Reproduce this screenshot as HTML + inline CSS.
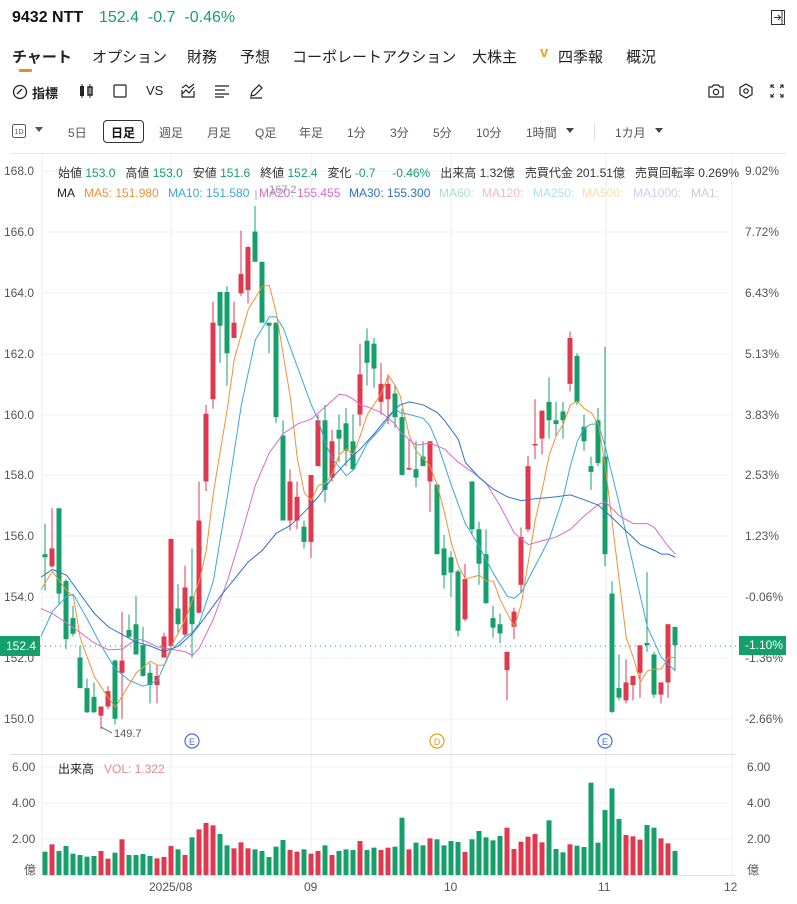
<!DOCTYPE html>
<html><head><meta charset="utf-8">
<style>
*{margin:0;padding:0;box-sizing:border-box}
body{width:797px;height:904px;background:#fff;font-family:"Liberation Sans","Noto Sans CJK JP",sans-serif;color:#222;position:relative;overflow:hidden}
.a{position:absolute;white-space:nowrap}
.g{color:#15a06b}
.tf{font-size:12px;color:#555;top:124px}
.info{font-size:12px;top:164px}
.ma{font-size:12px;top:186px}
.ax{font-size:12px;color:#555}
</style></head><body>
<div class="a" style="left:12px;top:9px;font-size:16px;font-weight:bold;color:#111">9432 NTT</div>
<div class="a g" style="left:99px;top:9px;font-size:16px">152.4&nbsp;&nbsp;-0.7&nbsp;&nbsp;-0.46%</div>
<svg class="a" style="left:771px;top:10px" width="14" height="15"><rect x="0.5" y="0.5" width="13" height="14" fill="none" stroke="#333"/><path d="M3 7.5H9M7 5L9.5 7.5L7 10" stroke="#333" fill="none"/><line x1="11" y1="1" x2="11" y2="14" stroke="#333"/></svg>

<div class="a" style="left:12px;top:46px;font-size:15px;font-weight:bold">チャート</div>
<div class="a" style="left:19px;top:69px;width:13px;height:3px;background:#e88a2a;border-radius:1px"></div>
<div class="a" style="left:92px;top:46px;font-size:15px">オプション</div>
<div class="a" style="left:187px;top:46px;font-size:15px">財務</div>
<div class="a" style="left:240px;top:46px;font-size:15px">予想</div>
<div class="a" style="left:292px;top:46px;font-size:15px">コーポレートアクション</div>
<div class="a" style="left:472px;top:46px;font-size:15px">大株主</div>
<div class="a" style="left:540px;top:44px;font-size:15px;color:#f0a020;font-weight:bold">v</div>
<div class="a" style="left:558px;top:46px;font-size:15px">四季報</div>
<div class="a" style="left:626px;top:46px;font-size:15px">概況</div>

<svg class="a" style="left:12px;top:84px" width="16" height="16"><circle cx="8" cy="8" r="6.5" fill="none" stroke="#222" stroke-width="1.3"/><path d="M5 10L10 5" stroke="#222" stroke-width="1.3"/></svg>
<div class="a" style="left:32px;top:83px;font-size:13px;font-weight:bold">指標</div>
<svg class="a" style="left:78px;top:83px" width="16" height="16"><rect x="2" y="3" width="4" height="10" fill="#222"/><line x1="4" y1="1" x2="4" y2="15" stroke="#222"/><rect x="10" y="4" width="4" height="8" fill="none" stroke="#222" stroke-width="1.5"/><line x1="12" y1="1" x2="12" y2="15" stroke="#222"/></svg>
<svg class="a" style="left:113px;top:84px" width="14" height="14"><rect x="1" y="1" width="12" height="12" rx="1" fill="none" stroke="#222" stroke-width="1.2"/></svg>
<div class="a" style="left:146px;top:83px;font-size:13px">VS</div>
<svg class="a" style="left:180px;top:83px" width="16" height="16"><path d="M2 7V14H14V8M2 11L6 7L9 10L14 4M2 5L6 2L9 5L14 1" fill="none" stroke="#222" stroke-width="1.2"/></svg>
<svg class="a" style="left:214px;top:84px" width="16" height="14"><path d="M1 2H15M1 6H11M1 10H15M1 13H10" stroke="#222" stroke-width="1.2"/></svg>
<svg class="a" style="left:248px;top:83px" width="16" height="16"><path d="M3 13L4 9L11 2L14 5L7 12Z M2 15H14" fill="none" stroke="#222" stroke-width="1.2"/></svg>
<svg class="a" style="left:708px;top:83px" width="16" height="16"><path d="M1 4H4L5.5 2H10.5L12 4H15V14H1Z" fill="none" stroke="#222" stroke-width="1.2"/><circle cx="8" cy="9" r="2.6" fill="none" stroke="#222" stroke-width="1.2"/></svg>
<svg class="a" style="left:738px;top:83px" width="16" height="16"><path d="M8 1L14 4.5V11.5L8 15L2 11.5V4.5Z" fill="none" stroke="#222" stroke-width="1.2"/><circle cx="8" cy="8" r="2.2" fill="none" stroke="#222" stroke-width="1.2"/></svg>
<svg class="a" style="left:770px;top:84px" width="14" height="14"><path d="M1 4V1H4M10 1H13V4M13 10V13H10M4 13H1V10M1 1L4 4M13 1L10 4M13 13L10 10M1 13L4 10" fill="none" stroke="#222" stroke-width="1.1"/></svg>

<svg class="a" style="left:12px;top:124px" width="14" height="14"><rect x="0.5" y="0.5" width="13" height="13" rx="2" fill="none" stroke="#555"/><text x="7" y="10" font-size="7" text-anchor="middle" fill="#555" font-family="Liberation Sans">1D</text></svg>
<div class="a" style="left:35px;top:127px;width:0;height:0;border-left:4px solid transparent;border-right:4px solid transparent;border-top:5px solid #555"></div>
<div class="a tf" style="left:68px">5日</div>
<div class="a" style="left:103px;top:120px;width:41px;height:23px;border:1px solid #333;border-radius:4px"></div>
<div class="a tf" style="left:111px;color:#111;font-weight:bold">日足</div>
<div class="a tf" style="left:159px">週足</div>
<div class="a tf" style="left:207px">月足</div>
<div class="a tf" style="left:255px">Q足</div>
<div class="a tf" style="left:299px">年足</div>
<div class="a tf" style="left:347px">1分</div>
<div class="a tf" style="left:390px">3分</div>
<div class="a tf" style="left:433px">5分</div>
<div class="a tf" style="left:476px">10分</div>
<div class="a tf" style="left:526px">1時間</div>
<div class="a" style="left:566px;top:128px;width:0;height:0;border-left:4px solid transparent;border-right:4px solid transparent;border-top:5px solid #444"></div>
<div class="a" style="left:594px;top:123px;width:1px;height:16px;background:#ddd"></div>
<div class="a tf" style="left:615px">1カ月</div>
<div class="a" style="left:655px;top:128px;width:0;height:0;border-left:4px solid transparent;border-right:4px solid transparent;border-top:5px solid #444"></div>

<svg id="ch" class="a" style="left:0;top:0" width="797" height="904"></svg>

<div class="a info" style="left:58px;color:#333">始値 <span class="g">153.0</span>&nbsp;&nbsp; 高値 <span class="g">153.0</span>&nbsp;&nbsp; 安値 <span class="g">151.6</span>&nbsp;&nbsp; 終値 <span class="g">152.4</span>&nbsp;&nbsp; 変化 <span class="g">-0.7</span>&nbsp;&nbsp;&nbsp;&nbsp; <span class="g">-0.46%</span>&nbsp;&nbsp; 出来高 1.32億&nbsp;&nbsp; 売買代金 201.51億&nbsp;&nbsp; 売買回転率 0.269%</div>
<div class="a ma" style="left:57px;color:#222">MA</div>
<div class="a ma" style="left:84px;color:#f0913a">MA5: 151.980</div>
<div class="a ma" style="left:168px;color:#3aa8d8">MA10: 151.580</div>
<div class="a ma" style="left:259px;color:#d86ad0">MA20: 155.455</div>
<div class="a ma" style="left:349px;color:#2c72c8">MA30: 155.300</div>
<div class="a ma" style="left:439px;color:#a8e0cc">MA60:</div>
<div class="a ma" style="left:482px;color:#f4b8c0">MA120:</div>
<div class="a ma" style="left:533px;color:#a8e4f0">MA250:</div>
<div class="a ma" style="left:582px;color:#f8e0a8">MA500:</div>
<div class="a ma" style="left:633px;color:#d8c8f0">MA1000:</div>
<div class="a ma" style="left:691px;color:#ccc">MA1:</div>
<div class="a" style="left:269px;top:184px;font-size:11px;color:#999">167.2</div>

<div class="a ax" style="left:4px;top:164px">168.0</div>
<div class="a ax" style="left:4px;top:225px">166.0</div>
<div class="a ax" style="left:4px;top:286px">164.0</div>
<div class="a ax" style="left:4px;top:347px">162.0</div>
<div class="a ax" style="left:4px;top:408px">160.0</div>
<div class="a ax" style="left:4px;top:468px">158.0</div>
<div class="a ax" style="left:4px;top:529px">156.0</div>
<div class="a ax" style="left:4px;top:590px">154.0</div>
<div class="a ax" style="left:4px;top:651px">152.0</div>
<div class="a ax" style="left:4px;top:712px">150.0</div>
<div class="a ax" style="left:745px;top:164px">9.02%</div>
<div class="a ax" style="left:745px;top:225px">7.72%</div>
<div class="a ax" style="left:745px;top:286px">6.43%</div>
<div class="a ax" style="left:745px;top:347px">5.13%</div>
<div class="a ax" style="left:745px;top:408px">3.83%</div>
<div class="a ax" style="left:745px;top:468px">2.53%</div>
<div class="a ax" style="left:745px;top:529px">1.23%</div>
<div class="a ax" style="left:745px;top:590px">-0.06%</div>
<div class="a ax" style="left:745px;top:651px">-1.36%</div>
<div class="a ax" style="left:745px;top:712px">-2.66%</div>
<div class="a" style="left:0;top:636px;width:40px;height:20px;background:#15a06b;color:#fff;font-size:12px;padding:3px 0 0 6px">152.4</div>
<div class="a" style="left:739px;top:636px;width:47px;height:19px;background:#15a06b;color:#fff;font-size:12px;padding:2px 0 0 6px">-1.10%</div>
<div class="a" style="left:114px;top:728px;font-size:11px;color:#555">149.7</div>

<div class="a ax" style="left:12px;top:760px">6.00</div>
<div class="a ax" style="left:12px;top:796px">4.00</div>
<div class="a ax" style="left:12px;top:832px">2.00</div>
<div class="a ax" style="left:24px;top:861px">億</div>
<div class="a ax" style="left:747px;top:760px">6.00</div>
<div class="a ax" style="left:747px;top:796px">4.00</div>
<div class="a ax" style="left:747px;top:832px">2.00</div>
<div class="a ax" style="left:747px;top:861px">億</div>
<div class="a" style="left:58px;top:760px;font-size:12px;color:#222">出来高&nbsp;&nbsp; <span style="color:#e88a90">VOL: 1.322</span></div>
<div class="a ax" style="left:149px;top:880px">2025/08</div>
<div class="a ax" style="left:304px;top:880px">09</div>
<div class="a ax" style="left:444px;top:880px">10</div>
<div class="a ax" style="left:598px;top:880px">11</div>
<div class="a ax" style="left:724px;top:880px">12</div>

<script>
var G="#15a06b",R="#e0394f";
var s='';
[171,232,293,354,415,475,536,597,658,719].forEach(function(y){s+='<line x1="42" x2="732" y1="'+y+'" y2="'+y+'" stroke="#f0f0f0"/>';});
[767,803,839].forEach(function(y){s+='<line x1="42" x2="732" y1="'+y+'" y2="'+y+'" stroke="#f0f0f0"/>';});
[42,171,311,451,606,732].forEach(function(x){s+='<line x1="'+x+'" x2="'+x+'" y1="153" y2="875" stroke="#eeeeee"/>';});
s+='<line x1="10" x2="786" y1="153.5" y2="153.5" stroke="#e6e6e6"/>';
s+='<line x1="10" x2="735" y1="754.5" y2="754.5" stroke="#e0e0e0"/>';
s+='<line x1="42" x2="735" y1="875.5" y2="875.5" stroke="#e0e0e0"/>';
s+='<line x1="40" x2="739" y1="646" y2="646" stroke="#15a06b" stroke-dasharray="1,4"/>';
var c=[
[G,1030,1038,950,1125],[R,1015,1062,910,1065],[G,910,1133,910,1160],[G,1100,1252,1095,1278],[G,1197,1238,1165,1245],
[G,1300,1380,1270,1380],[G,1380,1443,1355,1445],[G,1403,1443,1365,1445],[R,1428,1452,1428,1487],[R,1388,1428,1375,1435],
[G,1308,1460,1305,1475],[R,1308,1340,1180,1460],[G,1228,1246,1188,1250],[G,1213,1292,1140,1292],[G,1268,1348,1220,1350],
[G,1340,1372,1315,1420],[R,1348,1372,1320,1420],[R,1245,1300,1235,1300],[R,990,1270,990,1275],[G,1172,1213,1108,1240],
[R,1117,1240,1060,1245],[G,1140,1213,1015,1300],[R,942,1183,840,1185],[R,663,840,640,865],[R,425,625,370,650],
[G,345,433,345,530],[G,345,505,330,590],[R,425,465,370,465],[R,298,348,185,355],[R,227,340,227,375],
[G,187,266,120,266],[G,266,425,266,425],[G,425,433,425,505],[G,425,672,425,688],[G,720,942,680,942],
[R,840,942,808,968],[R,880,942,840,965],[G,958,998,942,1015],[R,823,998,823,1040],[R,680,800,665,800],
[G,680,862,640,895],[R,735,830,705,840],[G,705,728,665,790],[G,688,760,648,800],[G,735,808,665,810],
[R,560,665,480,695],[G,472,530,440,590],[G,480,545,465,595],[R,585,632,530,665],[R,585,625,560,690],
[G,610,672,590,700],[G,672,823,650,823],[R,805,808,730,810],[G,808,830,735,855],[G,775,800,735,800],
[R,735,840,735,920],[G,848,1030,848,1030],[G,1015,1085,980,1120],[G,1038,1078,1022,1142],[G,1075,1230,1070,1245],
[R,1095,1200,1055,1205],[G,840,965,840,980],[G,965,1055,945,1110],[G,1030,1158,965,1160],[G,1197,1222,1165,1248],
[G,1213,1237,1185,1262],[R,1285,1333,1285,1412],[R,1180,1220,1170,1252],[R,985,1110,960,1130],[R,800,965,773,972],
[R,742,746,625,782],[R,655,728,655,770],[G,632,680,568,728],[G,680,690,632,720],[G,657,680,632,728],
[R,465,585,448,605],[G,512,632,505,640],[G,697,735,665,760],[G,800,815,775,862],[G,680,792,648,800],
[G,775,1030,488,1062],[G,1133,1442,1100,1445],[G,1380,1405,1292,1412],[R,1365,1412,1305,1420],[R,1348,1372,1348,1412],
[R,1268,1340,1268,1405],[G,1262,1268,1077,1285],[G,1292,1397,1285,1405],[R,1365,1397,1365,1420],[R,1213,1365,1213,1405],
[G,1220,1268,1220,1333]];
function Y(z){return 160+z/2.613;}
c.forEach(function(d,i){var x=45+7*i;var t=Y(d[1]),b=Y(d[2]);if(b-t<1.5)b=t+1.5;
s+='<line x1="'+x+'" x2="'+x+'" y1="'+Y(d[3])+'" y2="'+Y(d[4])+'" stroke="'+d[0]+'" stroke-width="1"/>';
s+='<rect x="'+(x-2.5)+'" y="'+t+'" width="5" height="'+(b-t)+'" fill="'+d[0]+'"/>';});
var v=[305,283,303,288,311,315,320,318,303,326,308,268,315,315,312,318,325,321,288,298,315,262,238,219,226,252,286,295,277,295,298,303,321,290,270,300,305,298,311,303,286,315,303,298,300,273,300,293,300,293,290,
203,298,278,286,265,268,286,273,276,306,268,243,262,271,258,233,297,275,260,252,277,211,297,307,283,287,291,98,278,180,115,207,255,259,269,225,233,265,280,303];
v.forEach(function(z,i){var x=45+7*i;var t=750+z/3;s+='<rect x="'+(x-2.5)+'" y="'+t+'" width="5" height="'+(875-t)+'" fill="'+c[i][0]+'"/>';});
function L(a,b,col){var p=[];for(var i=0;i<a.length;i+=2)p.push((a[i]/3)+','+Y(a[i+1]));for(var i=0;i<b.length;i+=2)p.push((400+b[i]/3)+','+Y(b[i+1]));
s+='<polyline points="'+p.join(' ')+'" fill="none" stroke="'+col+'" stroke-width="1"/>';}
L([123,1123,157,1075,200,1125,220,1140,241,1250,283,1350,325,1405,346,1430,367,1400,409,1340,451,1310,472,1320,493,1320,514,1270,556,1200,598,1100,619,1020,640,870,682,650,703,520,745,390,787,330,808,328,829,400,871,620,892,780,913,870,934,890,955,850,976,845,997,820,1018,770,1039,755,1060,770,1081,720,1102,665,1144,610,1165,562,1186,590],
[0,615,28,720,48,760,70,780,90,800,112,850,133,920,154,1000,175,1060,196,1095,217,1090,238,1085,259,1100,280,1100,301,1150,343,1220,364,1160,385,1050,406,940,427,860,448,770,469,720,490,690,511,640,532,630,553,650,574,660,595,690,616,800,637,950,658,1100,679,1250,700,1300,721,1365,742,1335,763,1330,784,1330,805,1300,826,1300],"#f0913a");
L([123,1245,157,1180,200,1140,220,1135,262,1200,304,1270,346,1330,388,1360,430,1375,472,1360,493,1320,514,1280,556,1245,577,1235,598,1210,640,1100,682,880,724,640,766,470,808,410,829,410,850,440,892,540,934,640,955,680,976,740,997,780,1039,825,1060,810,1102,740,1144,700,1186,650],
[0,660,28,665,70,675,90,695,112,740,154,850,196,950,238,1010,280,1080,322,1140,343,1145,364,1130,406,1060,448,990,490,880,511,800,532,735,553,700,574,690,595,690,616,750,658,900,700,1060,742,1220,784,1300,826,1335],"#3aa8d8");
L([123,1172,157,1185,200,1210,241,1235,283,1262,325,1280,367,1278,409,1252,430,1255,472,1272,514,1278,556,1285,577,1295,598,1275,640,1200,682,1100,724,980,766,850,808,765,850,715,892,690,934,677,955,660,976,645,1018,612,1039,615,1060,625,1081,640,1102,645,1144,660,1186,690],
[0,710,48,745,90,740,133,755,175,790,217,815,259,845,301,905,343,975,385,1005,427,995,469,985,511,965,553,930,595,900,616,893,658,930,700,950,742,950,763,960,805,1010,826,1030],"#d86ad0");
L([123,1090,157,1070,200,1085,241,1135,283,1185,325,1220,367,1240,409,1260,451,1270,493,1285,535,1270,577,1238,598,1215,619,1190,661,1140,703,1095,745,1050,787,1020,829,975,871,955,913,920,955,880,997,830,1039,790,1081,755,1123,715,1165,670,1186,650],
[0,640,28,632,70,640,112,660,133,680,175,730,196,790,238,830,280,860,322,880,364,890,406,885,448,882,469,880,511,875,553,888,595,902,637,935,679,970,721,1005,763,1020,784,1030,805,1030,826,1038],"#2c72c8");
s+='<line x1="101" y1="727" x2="112" y2="733" stroke="#777"/>';
s+='<line x1="256" y1="190" x2="256" y2="200" stroke="#aaa"/>';
function M(x,t,col){s+='<circle cx="'+x+'" cy="741" r="7" fill="#fff" stroke="'+col+'" stroke-width="1.2"/><text x="'+x+'" y="745" font-size="9" text-anchor="middle" fill="'+col+'" font-family="Liberation Sans">'+t+'</text>';}
M(192,"E","#4a6ed8");M(437,"D","#e0a020");M(605,"E","#4a6ed8");
document.getElementById('ch').innerHTML=s;
</script>
</body></html>
